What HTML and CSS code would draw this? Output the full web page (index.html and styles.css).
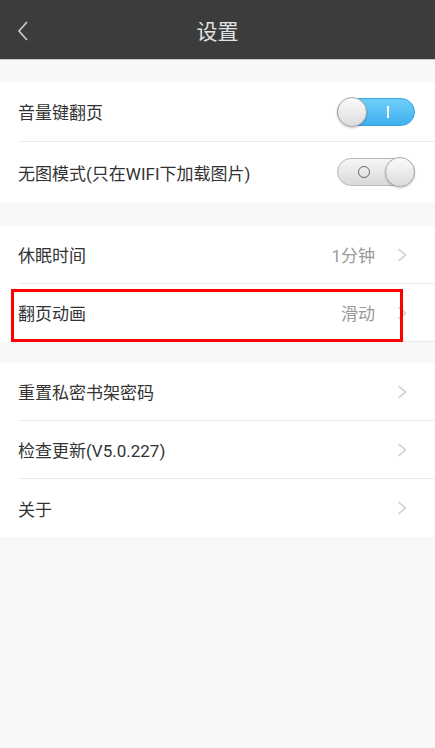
FILE: index.html
```html
<!DOCTYPE html>
<html lang="zh">
<head>
<meta charset="utf-8">
<title>设置</title>
<link rel="stylesheet" href="styles.css">
</head>
<body>
<div class="page">
  <header class="header">
    <div class="back">
      <svg width="12" height="20" viewBox="0 0 12 20"><polyline points="10,1 2,10 10,19" fill="none" stroke="#cfcfcf" stroke-width="1.6"/></svg>
    </div>
    <div class="title">设置</div>
    <div></div>
  </header>

  <div class="gap gap1"></div>
  <section class="group">
    <div class="row row-tall">
      <span class="label">音量键翻页</span>
      <span class="switch on"><span class="mark-i"></span><span class="knob"></span></span>
    </div>
    <div class="row row-tall">
      <span class="label">无图模式(只在WIFI下加载图片)</span>
      <span class="switch off"><span class="mark-o"></span><span class="knob"></span></span>
    </div>
  </section>

  <div class="gap gap2"></div>
  <section class="group group-mark">
    <div class="row">
      <span class="label">休眠时间</span>
      <span class="value">1分钟</span>
      <svg class="chev" width="10" height="14" viewBox="0 0 10 14"><polyline points="1.5,1 8.5,7 1.5,13" fill="none" stroke="#cdcdcd" stroke-width="1.5"/></svg>
    </div>
    <div class="row">
      <span class="label">翻页动画</span>
      <span class="value">滑动</span>
      <svg class="chev" width="10" height="14" viewBox="0 0 10 14"><polyline points="1.5,1 8.5,7 1.5,13" fill="none" stroke="#cdcdcd" stroke-width="1.5"/></svg>
    </div>
    <div class="highlight"></div>
  </section>

  <div class="gap gap3"></div>
  <section class="group">
    <div class="row">
      <span class="label">重置私密书架密码</span>
      <svg class="chev" width="10" height="14" viewBox="0 0 10 14"><polyline points="1.5,1 8.5,7 1.5,13" fill="none" stroke="#cdcdcd" stroke-width="1.5"/></svg>
    </div>
    <div class="row">
      <span class="label">检查更新(V5.0.227)</span>
      <svg class="chev" width="10" height="14" viewBox="0 0 10 14"><polyline points="1.5,1 8.5,7 1.5,13" fill="none" stroke="#cdcdcd" stroke-width="1.5"/></svg>
    </div>
    <div class="row">
      <span class="label">关于</span>
      <svg class="chev" width="10" height="14" viewBox="0 0 10 14"><polyline points="1.5,1 8.5,7 1.5,13" fill="none" stroke="#cdcdcd" stroke-width="1.5"/></svg>
    </div>
  </section>
</div>
</body>
</html>
```

FILE: styles.css
```css
html, body {
  margin: 0;
  padding: 0;
  background: #f8f8f8;
}
body {
  font-family: Roboto, "Noto Sans CJK SC", sans-serif;
  color: #333;
}
.page {
  width: 435px;
  min-height: 748px;
  background: #f8f8f8;
}
.header {
  height: 59px;
  background: #3c3c3c;
  border-bottom: 1px solid #c4c4c4;
  display: grid;
  grid-template-columns: 60px 1fr 60px;
  align-items: center;
}
.back {
  display: flex;
  align-items: center;
  padding-left: 17px;
  padding-top: 2px;
}
.title {
  text-align: center;
  font-size: 21px;
  color: #e2e2e2;
}
.gap1 { height: 22px; }
.gap2 { height: 24px; }
.gap3 { height: 21px; }
.group {
  background: #fff;
}
.group-mark {
  position: relative;
}
.row {
  box-sizing: border-box;
  height: 58px;
  margin-left: 18px;
  padding-right: 28px;
  border-bottom: 1px solid #ebebeb;
  display: flex;
  align-items: center;
  font-size: 17px;
}
.row:last-child {
  border-bottom: none;
}
.row-tall {
  height: 60px;
  padding-right: 20px;
}
.label {
  flex: 1;
  color: #333;
}
.value {
  color: #9a9a9a;
  margin-right: 22px;
}
.chev {
  display: block;
}
.switch {
  position: relative;
  box-sizing: border-box;
  width: 78px;
  height: 28px;
  border-radius: 14px;
}
.switch.on {
  background: linear-gradient(#6fcff9, #3fb0ef);
  border: 1px solid #3aa3e0;
}
.switch.off {
  background: linear-gradient(#f6f6f6, #d9d9d9);
  border: 1px solid #b9b9b9;
}
.knob {
  position: absolute;
  top: -2px;
  width: 30px;
  height: 30px;
  box-sizing: border-box;
  border-radius: 50%;
  background: linear-gradient(#fbfbfb, #dcdcdc);
  border: 1px solid #a9a9a9;
  box-shadow: 0 1px 2px rgba(0,0,0,0.25);
}
.switch.on .knob { left: -1px; }
.switch.off .knob { right: -1px; }
.mark-i {
  position: absolute;
  left: 49px;
  top: 7px;
  width: 2px;
  height: 12px;
  background: #fff;
}
.mark-o {
  position: absolute;
  left: 20px;
  top: 7px;
  width: 12px;
  height: 12px;
  box-sizing: border-box;
  border: 1.6px solid #666;
  border-radius: 50%;
}
.highlight {
  position: absolute;
  left: 11px;
  top: 63px;
  width: 392px;
  height: 53px;
  box-sizing: border-box;
  border: 3.5px solid #f00;
  pointer-events: none;
}
```
